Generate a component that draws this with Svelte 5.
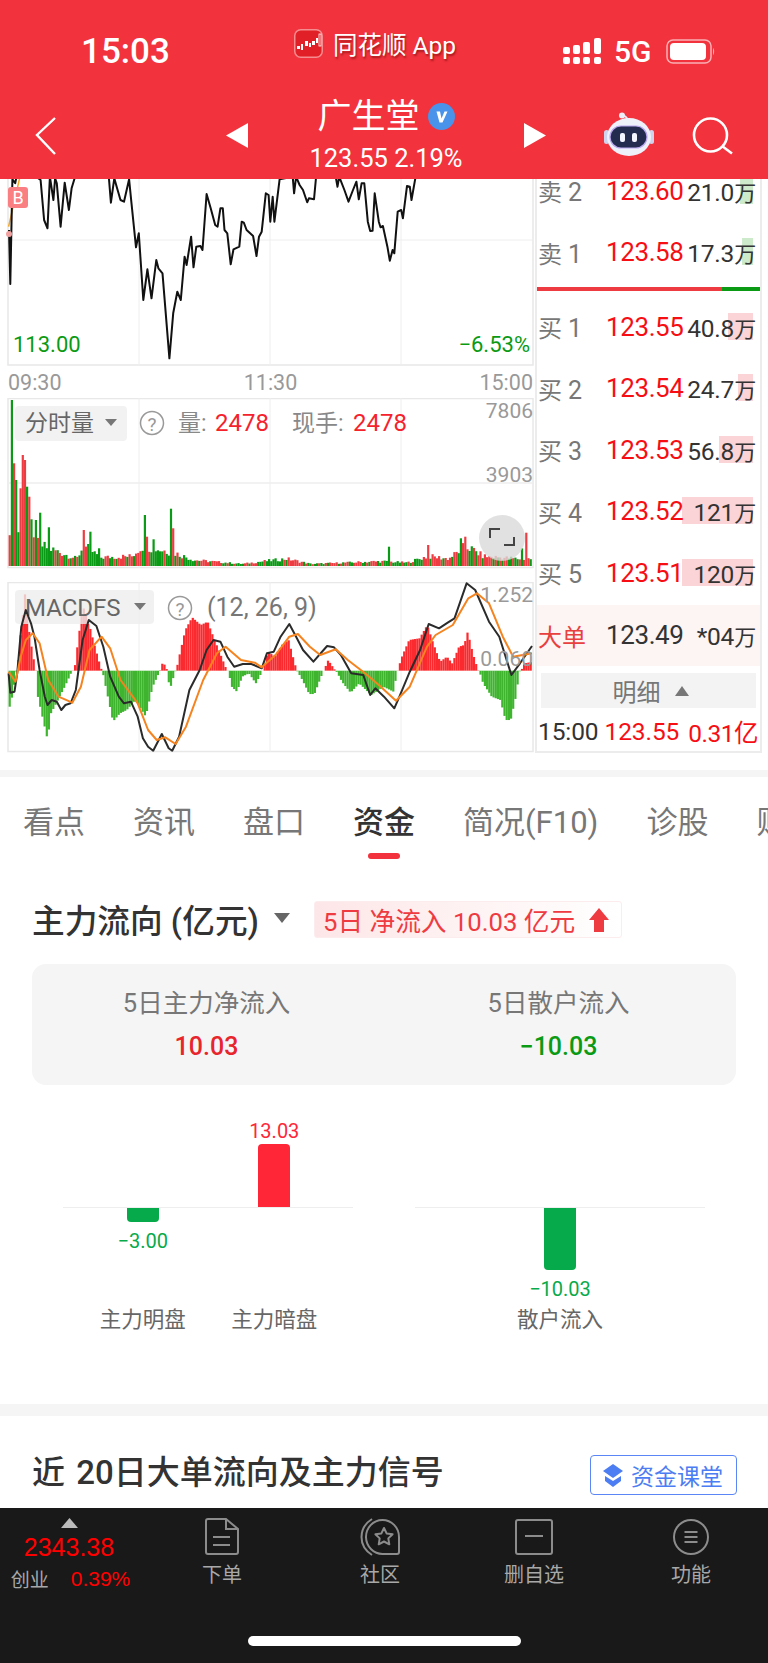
<script>
  // all traces are in zoomed chart units: x / 2.904, y / 3 from the chart origin
  const px = (x) => +(x / 2.904).toFixed(1);
  const toPoints = (pts, y0) =>
    pts.map(([x, y]) => `${px(x)},${(y0 + y / 3).toFixed(1)}`).join(' ');

  const CHART_W = 535;

  const pricePts = [
    [26, 180], [30, 342], [36, 28], [44, 40], [48, 20], [105, 20], [118, 30], [128, 150], [138, 175],
    [145, 20], [155, 90], [160, 25], [165, 40], [176, 170], [188, 38], [200, 120], [208, 55], [218, 20],
    [316, 20], [322, 98], [332, 25], [340, 55], [350, 90], [360, 95], [375, 28], [382, 100], [395, 232],
    [403, 190], [416, 390], [428, 298], [440, 385], [454, 270], [460, 295], [472, 310], [492, 565],
    [503, 430], [515, 365], [525, 390], [536, 260], [542, 285], [555, 200], [562, 292], [570, 230],
    [582, 228], [588, 240], [600, 72], [612, 115], [625, 165], [632, 170], [640, 115], [647, 115],
    [652, 180], [660, 190], [670, 283], [678, 238], [695, 230], [702, 155], [708, 158], [716, 180],
    [735, 198], [745, 258], [752, 200], [760, 185], [772, 70], [780, 75], [785, 155], [792, 80],
    [797, 155], [812, 28], [850, 20], [854, 70], [860, 20], [870, 45], [880, 60], [892, 97], [897, 85],
    [912, 88], [918, 20], [975, 20], [980, 50], [985, 20], [1000, 60], [1012, 95], [1025, 60], [1035, 35],
    [1042, 88], [1050, 40], [1058, 40], [1068, 155], [1075, 183], [1082, 182], [1088, 70], [1100, 155],
    [1105, 172], [1112, 168], [1125, 230], [1132, 272], [1140, 240], [1145, 250], [1155, 125], [1165, 120],
    [1170, 145], [1182, 48], [1190, 50], [1195, 90], [1207, 20]
  ];

  const difPts = [
    [25, 400], [30, 458], [42, 455], [50, 400], [62, 260], [75, 210], [90, 250], [100, 290], [115, 390],
    [130, 470], [138, 495], [150, 480], [165, 485], [178, 510], [190, 495], [205, 490], [220, 450],
    [240, 300], [258, 240], [280, 258], [300, 320], [320, 410], [345, 470], [360, 490], [380, 485],
    [400, 530], [415, 595], [430, 620], [445, 632], [470, 582], [490, 625], [500, 632], [520, 590],
    [550, 450], [580, 390], [600, 330], [620, 300], [640, 305], [660, 350], [680, 380], [705, 372],
    [730, 372], [760, 385], [775, 340], [795, 335], [815, 290], [840, 252], [860, 290], [880, 330],
    [910, 365], [950, 318], [970, 322], [990, 345], [1020, 400], [1055, 405], [1075, 465], [1090, 445],
    [1115, 470], [1145, 505], [1160, 470], [1190, 395], [1220, 330], [1245, 252], [1275, 265], [1300, 248],
    [1320, 235], [1355, 130], [1380, 150], [1420, 245], [1450, 290], [1485, 405], [1510, 370], [1545, 318]
  ];

  const deaPts = [
    [25, 395], [45, 425], [60, 350], [75, 300], [95, 280], [115, 310], [140, 420], [170, 470], [210, 488],
    [235, 440], [260, 330], [295, 290], [320, 325], [350, 420], [400, 490], [430, 570], [455, 600],
    [480, 592], [510, 612], [540, 560], [590, 420], [630, 340], [655, 320], [700, 360], [740, 368],
    [760, 382], [800, 345], [840, 290], [865, 282], [900, 320], [930, 345], [975, 328], [1010, 360],
    [1060, 400], [1100, 435], [1150, 482], [1190, 440], [1240, 320], [1265, 285], [1315, 255], [1360, 175],
    [1385, 160], [1420, 190], [1460, 290], [1490, 350], [1545, 340]
  ];

  const macdPts = [
    [25, 500], [32, 470], [44, 394], [48, 390], [55, 300], [62, 240], [68, 150], [75, 220], [85, 300],
    [100, 390], [103, 394], [105, 460], [120, 530], [135, 600], [145, 520], [160, 490], [185, 440], [205, 395],
    [210, 390], [215, 375], [225, 290], [238, 200], [250, 230], [270, 310], [290, 385], [295, 394],
    [300, 420], [312, 480], [325, 545], [345, 520], [365, 510], [390, 480], [420, 530], [440, 440], [460, 395],
    [463, 388], [470, 365], [480, 385], [483, 394], [490, 450], [505, 395], [510, 388], [515, 360], [535, 270],
    [555, 232], [580, 255], [600, 245], [620, 300], [640, 350], [655, 390], [660, 394], [670, 440], [685, 455],
    [700, 410], [720, 400], [740, 430], [758, 395], [762, 385], [775, 335], [795, 350], [815, 315], [835, 300],
    [850, 360], [858, 390], [862, 396], [875, 420], [895, 462], [910, 462], [935, 395], [940, 385], [950, 360],
    [968, 388], [975, 396], [990, 425], [1015, 458], [1040, 430], [1075, 465], [1110, 440], [1140, 455],
    [1150, 395], [1155, 385], [1160, 360], [1185, 300], [1215, 295], [1238, 255], [1255, 310], [1275, 365],
    [1295, 350], [1310, 370], [1330, 320], [1345, 315], [1355, 275], [1370, 340], [1385, 390], [1390, 396],
    [1400, 430], [1425, 470], [1450, 480], [1465, 540], [1480, 540], [1495, 470], [1505, 395], [1512, 388],
    [1520, 370], [1545, 365]
  ];

  const volEnvelope = [
    [25, 1020], [100, 1100], [180, 1140], [220, 1160], [240, 1110], [290, 1155], [380, 1150], [410, 1110],
    [480, 1130], [510, 1140], [560, 1165], [700, 1180], [760, 1170], [830, 1160], [900, 1180], [1100, 1170],
    [1180, 1175], [1240, 1150], [1300, 1160], [1350, 1110], [1400, 1150], [1500, 1160], [1548, 1160]
  ];

  // bars that stand out from the envelope: [x, top, colour]
  const volPeaks = [
    [32, 690, 'g'], [38, 880, 'r'], [45, 930, 'g'], [57, 955, 'r'], [64, 855, 'r'], [70, 870, 'r'],
    [76, 950, 'g'], [83, 980, 'r'], [89, 1048, 'g'], [102, 1050, 'g'], [114, 1028, 'g'], [140, 1072, 'g'],
    [241, 1080, 'r'], [260, 1085, 'g'], [286, 1135, 'g'], [419, 1035, 'g'], [425, 1100, 'r'], [444, 1108, 'g'],
    [495, 1016, 'g'], [501, 1075, 'r'], [1128, 1130, 'g'], [1242, 1125, 'r'], [1337, 1105, 'g'], [1350, 1100, 'r'],
    [1515, 1135, 'g'], [1526, 1088, 'r'], [1545, 1030, 'r']
  ];

  function interp(pts, x) {
    for (let i = 1; i < pts.length; i++) {
      if (x <= pts[i][0]) {
        const [x0, y0] = pts[i - 1];
        const [x1, y1] = pts[i];
        return y0 + ((y1 - y0) * (x - x0)) / (x1 - x0);
      }
    }
    return pts[pts.length - 1][1];
  }

  const noise = (i) => {
    const s = Math.sin(i * 12.9898) * 43758.5453;
    return s - Math.floor(s);
  };

  const STEP = 6.33;
  const barCount = Math.floor((1548 - 25) / STEP);

  const volBars = Array.from({ length: barCount }, (_, i) => {
    const x = 25 + i * STEP;
    const base = 1188 - interp(volEnvelope, x);
    let top = 1188 - base * (0.55 + 0.45 * noise(i));
    let up = noise(i + 500) > 0.5;
    const peak = volPeaks.find(([px0]) => Math.abs(px0 - x) < STEP / 2);
    if (peak) {
      top = peak[1];
      up = peak[2] === 'r';
    }
    return { x: px(x), y: +(170 + top / 3).toFixed(1), h: +((1188 - top) / 3).toFixed(1), up };
  });

  const macdBars = Array.from({ length: barCount }, (_, i) => {
    const x = 25 + i * STEP;
    const v = interp(macdPts, x);
    return { x: px(x), v };
  });

  const tabs = ['看点', '资讯', '盘口', '资金', '简况(F10)', '诊股', '财务'];
  const activeTab = '资金';

  const asks = [
    { label: '卖', n: 2, price: '123.60', vol: '21.0', bar: 13 },
    { label: '卖', n: 1, price: '123.58', vol: '17.3', bar: 11 }
  ];
  const bids = [
    { label: '买', n: 1, price: '123.55', vol: '40.8', bar: 25 },
    { label: '买', n: 2, price: '123.54', vol: '24.7', bar: 15 },
    { label: '买', n: 3, price: '123.53', vol: '56.8', bar: 34 },
    { label: '买', n: 4, price: '123.52', vol: '121', bar: 71 },
    { label: '买', n: 5, price: '123.51', vol: '120', bar: 71 }
  ];

  const gridX = [139, 270, 401];
</script>

<div class="phone">
  <header class="top">
    <div class="status">
      <span class="clock">15:03</span>
      <div class="app-name">
        <svg class="app-icon" width="29" height="29" viewBox="0 0 29 29">
          <rect x="0.75" y="0.75" width="27.5" height="27.5" rx="6" fill="#e01f26" stroke="#f58d90" stroke-width="1.500" />
          <g fill="#fff">
            <rect x="3" y="17" width="3" height="3" />
            <rect x="7" y="15" width="2" height="6" />
            <rect x="11" y="12" width="3" height="5" />
            <rect x="15" y="14" width="2" height="4" />
            <rect x="18" y="12" width="3" height="4" />
            <rect x="22" y="9" width="2" height="5" />
          </g>
          <rect x="25" y="5" width="2" height="12" fill="none" stroke="#fff" stroke-width="0.800" />
        </svg>
        <span>同花顺 App</span>
      </div>
      <div class="status-right">
        <svg width="38" height="26" viewBox="0 0 38 26" fill="#fff">
          <rect x="0" y="9" width="7" height="7" rx="2" /><rect x="0" y="19" width="7" height="7" rx="2" />
          <rect x="10" y="7" width="7" height="9" rx="2" /><rect x="10" y="19" width="7" height="7" rx="2" />
          <rect x="20" y="4" width="7" height="12" rx="2" /><rect x="20" y="19" width="7" height="7" rx="2" />
          <rect x="31" y="0" width="7" height="16" rx="2" /><rect x="31" y="19" width="7" height="7" rx="2" />
        </svg>
        <span class="net">5G</span>
        <svg width="49" height="25" viewBox="0 0 49 25">
          <rect x="1" y="1" width="44" height="23" rx="6" fill="none" stroke="#f9b1b5" stroke-width="1.5" />
          <rect x="4" y="4" width="36" height="17" rx="4" fill="#fff" />
          <path d="M47 9c1.5 .5 1.5 6 0 7z" fill="#f9b1b5" />
        </svg>
      </div>
    </div>
    <div class="nav">
      <svg class="back" width="24" height="40" viewBox="0 0 24 40">
        <path d="M21 2 3 19l18 19" fill="none" stroke="#fff" stroke-width="2.4" />
      </svg>
      <svg class="prev" width="22" height="25" viewBox="0 0 22 25"><path d="M22 0v25L0 12.500z" fill="#fff" /></svg>
      <div class="stock">
        <div class="stock-name">
          <span>广生堂</span>
          <svg width="27" height="27" viewBox="0 0 27 27">
            <circle cx="13.500" cy="13.500" r="13.500" fill="#4a93ea" />
            <path d="M8.500 8.500h3.500l1.500 7 3-7h3l-5 11h-3z" fill="#fff" />
          </svg>
        </div>
        <div class="stock-price">123.55 2.19%</div>
      </div>
      <svg class="next" width="22" height="25" viewBox="0 0 22 25"><path d="M0 0v25l22-12.500z" fill="#fff" /></svg>
      <svg class="robot" width="50" height="46" viewBox="0 0 50 46">
        <path d="M18 3.500c3 0 5 2 6 5" fill="none" stroke="#e7e9f5" stroke-width="1.800" />
        <circle cx="18" cy="3.500" r="3" fill="#eceef8" />
        <rect x="0" y="18" width="5" height="14" rx="2.500" fill="#cfd2ec" />
        <rect x="45" y="18" width="5" height="14" rx="2.500" fill="#cfd2ec" />
        <ellipse cx="25" cy="25" rx="22" ry="19" fill="#eef0fa" />
        <rect x="6" y="14" width="37" height="22" rx="11" fill="#232c4f" stroke="#b9a6ee" stroke-width="1.200" />
        <rect x="16" y="21" width="5" height="9" rx="2" fill="#f2f4ff" />
        <rect x="28" y="21" width="5" height="9" rx="2" fill="#f2f4ff" />
      </svg>
      <svg class="search" width="42" height="42" viewBox="0 0 42 42">
        <circle cx="19.500" cy="19" r="16.500" fill="none" stroke="#fff" stroke-width="2.600" />
        <path d="M31 30l10 7.500" stroke="#fff" stroke-width="2.600" />
      </svg>
    </div>
  </header>

  <section class="market">
    <div class="charts">
      <svg class="price-chart" width={CHART_W} height="187" viewBox="0 179 535 187">
        <path d="M8 178V365H533V178" fill="none" stroke="#e8e8e8" stroke-width="1.500" />
        <line x1="8" x2="533" y1="240" y2="240" stroke="#eee" />
        {#each gridX as x}
          <line x1={x} x2={x} y1="178" y2="365" stroke="#eee" />
        {/each}
        <polyline points={toPoints([[25, 170], [38, 110], [57, 25]], 170)} fill="none" stroke="#f5a623" stroke-width="1.500" />
        <polyline points={toPoints(pricePts, 170)} fill="none" stroke="#111" stroke-width="2" stroke-linejoin="round" />
        <rect x="8" y="187" width="20" height="21" rx="3" fill="#f97f82" />
        <text x="18" y="204" class="b-mark">B</text>
        <circle cx="9" cy="234" r="3" fill="#f2a0a0" />
        <text x="13" y="352" class="axis-low">113.00</text>
        <text x="530" y="352" class="axis-low end">−6.53%</text>
      </svg>
      <div class="times"><span>09:30</span><span>11:30</span><span>15:00</span></div>
      <svg class="vol-chart" width={CHART_W} height="172" viewBox="0 398 535 172">
        <rect x="8" y="398.500" width="525" height="169" fill="none" stroke="#e8e8e8" stroke-width="1.500" />
        <line x1="8" x2="533" y1="483" y2="483" stroke="#eee" stroke-width="1.500" />
        {#each gridX as x}
          <line x1={x} x2={x} y1="398" y2="568" stroke="#eee" />
        {/each}
        {#each volBars as b}
          <rect x={b.x} y={b.y} width="2.200" height={b.h} fill={b.up ? '#ee3d42' : '#0b9a15'} />
        {/each}
        <rect x="15" y="406" width="112" height="35" rx="4" fill="#f2f2f2" />
        <text x="25" y="431" class="chip">分时量</text>
        <path d="M105 419h12l-6 7z" fill="#777" />
        <circle cx="152" cy="423" r="11.500" fill="#fff" stroke="#999" stroke-width="1.500" />
        <text x="152" y="431" class="help">?</text>
        <text x="178" y="431" class="readout">量:</text>
        <text x="215" y="431" class="readout num">2478</text>
        <text x="292" y="431" class="readout">现手:</text>
        <text x="353" y="431" class="readout num">2478</text>
        <text x="533" y="418" class="scale">7806</text>
        <text x="533" y="482" class="scale">3903</text>
        <circle cx="502" cy="538" r="23" fill="#d9d9d9" fill-opacity="0.8" />
        <path d="M490 538v-9h10M514 537v8h-10" fill="none" stroke="#444" stroke-width="2" />
      </svg>
      <svg class="macd-chart" width={CHART_W} height="172" viewBox="0 582 535 172">
        <rect x="8" y="582.500" width="525" height="169" fill="none" stroke="#e8e8e8" stroke-width="1.500" />
        {#each gridX as x}
          <line x1={x} x2={x} y1="582" y2="752" stroke="#eee" />
        {/each}
        {#each macdBars as b}
          <rect
            x={b.x}
            y={b.v < 392 ? 540 + b.v / 3 : 670.7}
            width="2.200"
            height={Math.abs(b.v - 392) / 3}
            fill={b.v < 392 ? '#fb2a2e' : '#3fb52f'}
          />
        {/each}
        <rect x="15" y="590" width="139" height="34" rx="4" fill="#eee" fill-opacity="0.8" />
        <text x="25" y="616" class="chip wide">MACDFS</text>
        <path d="M134 603h12l-6 7z" fill="#777" />
        <circle cx="180" cy="608" r="11.500" fill="#fff" stroke="#999" stroke-width="1.500" />
        <text x="180" y="616" class="help">?</text>
        <text x="207" y="616" class="params">(12, 26, 9)</text>
        <polyline points={toPoints(difPts, 540)} fill="none" stroke="#2b2b2b" stroke-width="2" stroke-linejoin="round" />
        <polyline points={toPoints(deaPts, 540)} fill="none" stroke="#f5831f" stroke-width="2" stroke-linejoin="round" />
        <text x="533" y="602" class="scale">1.252</text>
        <text x="533" y="666" class="scale">0.060</text>
      </svg>
    </div>

    <aside class="depth">
      <div class="depth-rows">
        {#each asks as row}
          <div class="depth-row">
            <span class="side">{row.label}<i>{row.n}</i></span>
            <span class="price">{row.price}</span>
            <span class="vol">
              <b class="vol-bar ask" style="width: {row.bar}px"></b>
              <span class="vol-text">{row.vol}<em>万</em></span>
            </span>
          </div>
        {/each}
      </div>
      <div class="ratio"><div class="ratio-red"></div><div class="ratio-green"></div></div>
      {#each bids as row}
        <div class="depth-row">
          <span class="side">{row.label}<i>{row.n}</i></span>
          <span class="price">{row.price}</span>
          <span class="vol">
            <b class="vol-bar bid" style="width: {row.bar}px"></b>
            <span class="vol-text">{row.vol}<em>万</em></span>
          </span>
        </div>
      {/each}
      <div class="big-order">
        <span class="side big">大单</span>
        <span class="price dark">123.49</span>
        <span class="vol"><span class="vol-text">*04<em>万</em></span></span>
      </div>
      <div class="detail-btn"><span>明细</span><svg width="14" height="10" viewBox="0 0 14 10"><path d="M7 0l7 10H0z" fill="#777" /></svg></div>
      <div class="tick">
        <span>15:00</span>
        <span class="tick-price">123.55</span>
        <span class="tick-amount">0.31亿</span>
      </div>
    </aside>
  </section>

  <div class="strip first"></div>

  <nav class="tabs">
    {#each tabs as tab}
      <span class="tab" class:active={tab === activeTab}>{tab}</span>
    {/each}
  </nav>

  <section class="flow">
    <div class="flow-title">
      <h2>主力流向 (亿元)</h2>
      <svg width="16" height="10" viewBox="0 0 16 10"><path d="M0 0h16l-8 10z" fill="#666" /></svg>
      <div class="tag">
        <span>5日 净流入 10.03 亿元</span>
        <svg width="20" height="24" viewBox="0 0 20 24"><path d="M10 0l10 12h-5v12H5V12H0z" fill="#ee3b42" /></svg>
      </div>
    </div>
    <div class="summary">
      <div class="summary-cell">
        <span class="summary-label">5日主力净流入</span>
        <span class="summary-value up">10.03</span>
      </div>
      <div class="summary-cell">
        <span class="summary-label">5日散户流入</span>
        <span class="summary-value down">−10.03</span>
      </div>
    </div>
    <div class="bars">
      <div class="bar-group">
        <div class="bar-col">
          <div class="bar-top"></div>
          <div class="bar-bottom">
            <div class="bar neg" style="height: 15px"></div>
            <span class="bar-val down-b">−3.00</span>
          </div>
          <span class="bar-name">主力明盘</span>
        </div>
        <div class="bar-col">
          <div class="bar-top">
            <span class="bar-val up-b">13.03</span>
            <div class="bar pos" style="height: 63px"></div>
          </div>
          <div class="bar-bottom"></div>
          <span class="bar-name">主力暗盘</span>
        </div>
      </div>
      <div class="bar-group single">
        <div class="bar-col">
          <div class="bar-top"></div>
          <div class="bar-bottom">
            <div class="bar neg" style="height: 63px"></div>
            <span class="bar-val down-b">−10.03</span>
          </div>
          <span class="bar-name">散户流入</span>
        </div>
      </div>
    </div>
  </section>

  <div class="strip second"></div>

  <section class="signal">
    <h2>近 20日大单流向及主力信号</h2>
    <div class="class-btn">
      <svg width="22" height="26" viewBox="0 0 22 26">
        <path d="M11 2l10 7-10 7L1 9z" fill="#4d7df2" />
        <path d="M3 14l8 5 8-5v5l-8 6-8-6z" fill="#4d7df2" />
      </svg>
      <span>资金课堂</span>
    </div>
  </section>

  <footer class="dock">
    <div class="dock-items">
      <div class="index">
        <svg width="17" height="10" viewBox="0 0 17 10"><path d="M8.500 0L17 10H0z" fill="#bbb" /></svg>
        <span class="index-value">2343.38</span>
        <div class="index-row"><span class="index-name">创业</span><span class="index-pct">0.39%</span></div>
      </div>
      <div class="dock-item">
        <svg width="36" height="38" viewBox="0 0 36 38" fill="none" stroke="#8c8c8c" stroke-width="2">
          <path d="M2 3a2 2 0 0 1 2-2h18l12 10v23a2 2 0 0 1-2 2H4a2 2 0 0 1-2-2z" />
          <path d="M22 1v10h12M9 19h17M9 27h17" />
        </svg>
        <span>下单</span>
      </div>
      <div class="dock-item">
        <svg width="40" height="38" viewBox="0 0 40 38" fill="none" stroke="#8c8c8c" stroke-width="2" stroke-linejoin="round">
          <path d="M23 36a16.500 17 0 1 1 16-17v15a2 2 0 0 1-2 2z" />
          <path d="M12 1C-2 10-2 28 12 37" />
          <path d="M24 10L26.600 15.400 32.600 16.200 28.300 20.400 29.300 26.300 24 23.500 18.700 26.300 19.700 20.400 15.400 16.200 21.400 15.400Z" />
        </svg>
        <span>社区</span>
      </div>
      <div class="dock-item">
        <svg width="38" height="36" viewBox="0 0 38 36" fill="none" stroke="#8c8c8c" stroke-width="2">
          <rect x="1" y="1" width="36" height="34" rx="2" />
          <path d="M10 17h18" />
        </svg>
        <span>删自选</span>
      </div>
      <div class="dock-item">
        <svg width="36" height="36" viewBox="0 0 36 36" fill="none" stroke="#8c8c8c" stroke-width="2">
          <circle cx="18" cy="18" r="17" />
          <path d="M11.500 13h13M11.500 18h13M11.500 23h13" />
        </svg>
        <span>功能</span>
      </div>
    </div>
    <div class="home-bar"></div>
  </footer>
</div>

<style>
  :global(body) {
    margin: 0;
    background: #fff;
  }

  .phone {
    width: 768px;
    height: 1663px;
    overflow: hidden;
    display: flex;
    flex-direction: column;
    background: #fff;
    font-family: Roboto, "Noto Sans CJK SC", sans-serif;
    color: #333;
  }

  h2 {
    margin: 0;
    font-weight: 500;
  }

  /* header */
  .top {
    height: 179px;
    flex: none;
    background: #f2323c;
    color: #fff;
    position: relative;
    z-index: 2;
  }

  .status {
    height: 84px;
    display: flex;
    align-items: center;
    padding-left: 81px;
  }

  .clock {
    width: 213px;
    font-size: 35px;
    font-weight: 500;
    margin-top: 18px;
  }

  .app-name {
    display: flex;
    align-items: center;
    gap: 10px;
    width: 269px;
    font-size: 24.500px;
    margin-top: 3px;
    text-shadow: 1px 2px 2px rgba(90, 0, 0, 0.5);
  }

  .status-right {
    display: flex;
    align-items: center;
    gap: 13px;
    margin-top: 18px;
  }

  .net {
    font-size: 30px;
    font-weight: 500;
    margin-right: 1px;
  }

  .nav {
    height: 95px;
    position: relative;
    display: flex;
    align-items: center;
  }

  .back {
    margin: 9px 0 0 34px;
  }

  .prev {
    margin: 7px 0 0 168px;
  }

  .stock {
    width: 276px;
    text-align: center;
    margin-top: 5px;
  }

  .stock-name {
    display: flex;
    align-items: center;
    justify-content: center;
    gap: 8px;
    font-size: 34px;
    line-height: 42px;
  }

  .stock-price {
    font-size: 25.500px;
    line-height: 30px;
    margin-top: 6px;
  }

  .next {
    margin-top: 7px;
  }

  .robot {
    margin: 7px 0 0 58px;
  }

  .search {
    margin: 11px 0 0 37px;
  }

  /* chart + order book */
  .market {
    height: 591px;
    flex: none;
    display: flex;
    overflow: hidden;
  }

  .charts {
    width: 535px;
    flex: none;
    display: flex;
    flex-direction: column;
  }

  .charts svg {
    display: block;
    flex: none;
  }

  .times {
    height: 32px;
    display: flex;
    justify-content: space-between;
    align-items: center;
    padding: 0 2px 0 8px;
    font-size: 21.500px;
    color: #999;
  }

  .macd-chart {
    margin-top: 12px;
  }

  .b-mark {
    fill: #fff;
    font-size: 18px;
    text-anchor: middle;
  }

  .axis-low {
    fill: #0a9a14;
    font-size: 22px;
  }

  .end {
    text-anchor: end;
  }

  .chip {
    fill: #666;
    font-size: 23px;
  }

  .chip.wide {
    font-size: 24px;
  }

  .help {
    fill: #999;
    font-size: 19px;
    text-anchor: middle;
  }

  .readout {
    fill: #888;
    font-size: 23px;
  }

  .readout.num {
    fill: #f5222d;
    font-size: 24px;
  }

  .params {
    fill: #777;
    font-size: 25px;
  }

  .scale {
    fill: #999;
    font-size: 21px;
    text-anchor: end;
  }

  .depth {
    width: 227px;
    height: 574px;
    flex: none;
    border-left: 2px solid #ececec;
    border-right: 2px solid #ececec;
    border-bottom: 2px solid #ececec;
    margin-right: 6px;
    box-sizing: border-box;
  }

  .depth-rows {
    margin-top: -19px;
  }

  .depth-row,
  .big-order {
    height: 61.5px;
    display: flex;
    align-items: center;
    padding-left: 1px;
    position: relative;
  }

  .side {
    width: 68px;
    flex: none;
    font-size: 24px;
    color: #777;
    white-space: nowrap;
  }

  .side i {
    font-style: normal;
    margin-left: 6px;
    font-size: 25px;
  }

  .side.big {
    color: #e8403f;
  }

  .price {
    position: relative;
    z-index: 1;
    width: 76px;
    flex: none;
    font-size: 26px;
    letter-spacing: -0.4px;
    color: #f70e14;
    white-space: nowrap;
  }

  .price.dark {
    color: #333;
  }

  .vol {
    width: 73px;
    flex: none;
    display: flex;
    justify-content: flex-end;
    position: relative;
    height: 28px;
    align-items: center;
    white-space: nowrap;
  }

  .vol-bar {
    position: absolute;
    right: 2px;
    top: 0;
    height: 27px;
  }

  .vol-bar.bid {
    background: #fad4d6;
  }

  .vol-bar.ask {
    background: #cdeacb;
  }

  .vol-text {
    position: relative;
    font-size: 24.500px;
    color: #333;
    margin-right: -1px;
    letter-spacing: -0.2px;
  }

  .vol-text em {
    font-style: normal;
    font-size: 22px;
  }

  .ratio {
    height: 4px;
    margin: 4px 0 5px;
    display: flex;
  }

  .ratio-red {
    width: 185px;
    background: #ee3b42;
  }

  .ratio-green {
    flex: 1;
    background: #0a9a14;
  }

  .big-order {
    margin-top: 1px;
    background: #fdf4f4;
  }

  .detail-btn {
    height: 35px;
    margin: 7px 4px 0;
    display: flex;
    align-items: center;
    justify-content: center;
    gap: 14px;
    padding-left: 4px;
    background: #f3f3f3;
    font-size: 24px;
    color: #777;
  }

  .tick {
    height: 41px;
    display: flex;
    align-items: center;
    padding: 6px 0 0 1px;
    box-sizing: border-box;
    font-size: 24.500px;
    letter-spacing: -0.1px;
    color: #333;
    white-space: nowrap;
  }

  .tick-price {
    margin-left: 6px;
    color: #f70e14;
  }

  .tick-amount {
    margin-left: 9px;
    color: #f70e14;
    letter-spacing: -0.5px;
  }

  .strip {
    flex: none;
    background: #f5f5f5;
  }

  .strip.first {
    height: 7px;
  }

  .strip.second {
    height: 12px;
  }

  /* tabs */
  .tabs {
    height: 83px;
    flex: none;
    display: flex;
    gap: 48px;
    padding-left: 23px;
    overflow: hidden;
    box-sizing: border-box;
    padding-top: 24px;
    white-space: nowrap;
  }

  .tab {
    position: relative;
    font-size: 31px;
    line-height: 44px;
    color: #777;
    flex: none;
  }

  .tab.active {
    color: #333;
    font-weight: 500;
  }

  .tab.active::after {
    content: "";
    position: absolute;
    left: 15px;
    right: 15px;
    top: 52px;
    height: 6px;
    border-radius: 3px;
    background: #f2323c;
  }

  /* fund flow */
  .flow {
    height: 544px;
    flex: none;
    box-sizing: border-box;
    padding: 39px 32px 0;
  }

  .flow-title {
    height: 38px;
    display: flex;
    align-items: center;
  }

  .flow-title h2 {
    font-size: 32.700px;
    color: #333;
    white-space: nowrap;
    margin-right: 15px;
  }

  .tag {
    margin: 3px 0 0 24px;
    height: 37px;
    padding: 0 12px 0 8px;
    display: flex;
    align-items: center;
    gap: 14px;
    border: 1px solid #fdeced;
    box-sizing: border-box;
    border-radius: 3px;
    background: linear-gradient(90deg, #fde6e7, #fff);
    color: #ee3b42;
    font-size: 25.700px;
    white-space: nowrap;
  }

  .summary {
    margin-top: 27px;
    height: 121px;
    width: 704px;
    background: #f5f5f5;
    border-radius: 14px;
    display: grid;
    grid-template-columns: 349px 355px;
    box-sizing: border-box;
    padding-top: 21px;
  }

  .summary-cell {
    display: flex;
    flex-direction: column;
    align-items: center;
    gap: 8px;
  }

  .summary-label {
    font-size: 25.500px;
    line-height: 36px;
    color: #777;
  }

  .summary-value {
    font-size: 25px;
    line-height: 36px;
    font-weight: 500;
  }

  .summary-value.up {
    color: #e8242c;
  }

  .summary-value.down {
    color: #0a9a14;
  }

  .bars {
    display: flex;
    gap: 62px;
    padding-left: 31px;
    margin-top: 32px;
  }

  .bar-group {
    width: 290px;
    display: grid;
    grid-template-columns: 1fr 1fr;
    padding: 0 13px 0 14px;
    box-sizing: border-box;
    position: relative;
  }

  .bar-group.single {
    grid-template-columns: 1fr;
    padding: 0;
  }

  /* zero line of the bars */
  .bar-group::before {
    content: "";
    position: absolute;
    top: 90px;
    left: 0;
    right: 0;
    height: 1px;
    background: #eee;
  }

  .bar-col {
    display: grid;
    grid-template-rows: 90px 90px auto;
    justify-items: center;
  }

  .bar-top {
    display: flex;
    flex-direction: column;
    justify-content: flex-end;
    align-items: center;
  }

  .bar-bottom {
    display: flex;
    flex-direction: column;
    align-items: center;
    width: 100%;
  }

  .bar {
    width: 32px;
    flex: none;
  }

  .bar.pos {
    background: #ff2638;
    border-radius: 4px 4px 0 0;
  }

  .bar.neg {
    background: #07aa4a;
    border-radius: 0 0 4px 4px;
  }

  .bar-val {
    font-size: 20px;
    line-height: 26px;
  }

  .up-b {
    color: #ff2638;
  }

  .down-b {
    color: #07aa4a;
    margin-top: 6px;
  }

  .bar-name {
    font-size: 21.500px;
    color: #666;
    line-height: 32px;
    margin-top: 7px;
    white-space: nowrap;
  }

  /* next section */
  .signal {
    flex: 1;
    display: flex;
    align-items: flex-start;
    justify-content: space-between;
    padding: 36px 31px 0 32px;
    min-height: 0;
    overflow: hidden;
  }

  .signal h2 {
    font-size: 33px;
    line-height: 42px;
    color: #333;
    white-space: nowrap;
    word-spacing: 3px;
  }

  .class-btn {
    margin-top: 3px;
    height: 40px;
    width: 147px;
    box-sizing: border-box;
    border: 1.500px solid #5b86f5;
    border-radius: 4px;
    display: flex;
    align-items: center;
    gap: 7px;
    padding-left: 11px;
    font-size: 23px;
    color: #4d7df2;
    white-space: nowrap;
  }

  /* dock */
  .dock {
    height: 155px;
    flex: none;
    background: #191919;
    position: relative;
    color: #a8a8a8;
  }

  .dock-items {
    display: grid;
    grid-template-columns: 138px 168px 148px 160px 154px;
    padding-top: 10px;
  }

  .index {
    display: flex;
    flex-direction: column;
    align-items: center;
  }

  .index svg {
    display: block;
  }

  .index-value {
    font-family: "Liberation Sans", sans-serif;
    font-size: 25px;
    line-height: 30px;
    color: #f00;
    margin-top: 4px;
  }

  .index-row {
    display: flex;
    align-items: center;
    gap: 22px;
    margin-top: 3px;
    padding-left: 3px;
  }

  .index-name {
    font-size: 19px;
  }

  .index-pct {
    font-family: "Liberation Sans", sans-serif;
    font-size: 21px;
    color: #f00;
  }

  .dock-item {
    display: flex;
    flex-direction: column;
    align-items: center;
    font-size: 20px;
    line-height: 26px;
    gap: 6px;
  }

  .dock-item svg {
    height: 38px;
    display: block;
  }

  .home-bar {
    position: absolute;
    left: 248px;
    top: 128px;
    width: 273px;
    height: 10px;
    border-radius: 5px;
    background: #fff;
  }
</style>
